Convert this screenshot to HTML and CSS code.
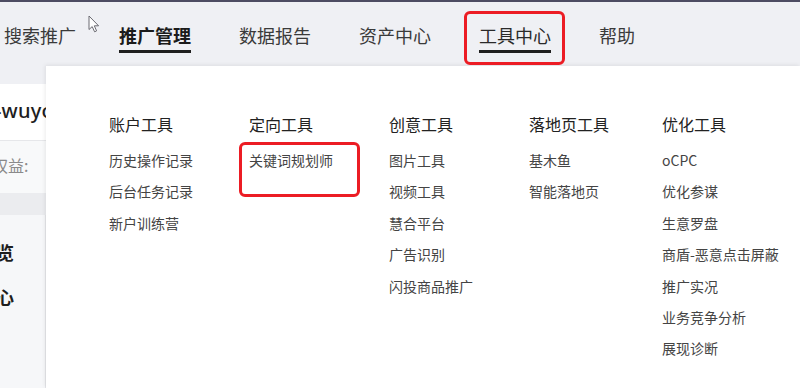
FILE: index.html
```html
<!DOCTYPE html>
<html lang="zh-CN">
<head>
<meta charset="utf-8">
<title>工具中心</title>
<link rel="stylesheet" href="styles.css">
</head>
<body>
<div class="topline"></div>
<header class="header">
  <nav class="nav">
    <span class="nav-item first">搜索推广</span>
    <span class="nav-item active">推广管理</span>
    <span class="nav-item">数据报告</span>
    <span class="nav-item">资产中心</span>
    <span class="nav-item current">工具中心<span class="mark"></span></span>
    <span class="nav-item">帮助</span>
  </nav>
  <svg class="cursor" width="12" height="18" viewBox="0 0 12 18"><path d="M1 1 L1 14.5 L4.2 11.6 L6.6 16.8 L8.6 15.9 L6.3 10.8 L10.6 10.8 Z" fill="#fff" stroke="#6b6b72" stroke-width="1" stroke-linejoin="round"/></svg>
</header>
<main class="main">
  <aside class="side">
    <div class="side-gap"></div>
    <div class="side-user"><span>-wuyou</span></div>
    <div class="side-rights"><span class="rights-text">权益:</span><span class="rights-icon"></span></div>
    <div class="side-band"></div>
    <div class="side-menu">
      <div class="side-item">概览</div>
      <div class="side-item">中心</div>
    </div>
  </aside>
  <section class="panel">
    <div class="col">
      <h3>账户工具</h3>
      <ul><li>历史操作记录</li><li>后台任务记录</li><li>新户训练营</li></ul>
    </div>
    <div class="col">
      <h3>定向工具</h3>
      <ul><li class="boxed">关键词规划师<span class="mark mark-item"></span></li></ul>
    </div>
    <div class="col">
      <h3>创意工具</h3>
      <ul><li>图片工具</li><li>视频工具</li><li>慧合平台</li><li>广告识别</li><li>闪投商品推广</li></ul>
    </div>
    <div class="col col-narrow">
      <h3>落地页工具</h3>
      <ul><li>基木鱼</li><li>智能落地页</li></ul>
    </div>
    <div class="col">
      <h3>优化工具</h3>
      <ul><li>oCPC</li><li>优化参谋</li><li>生意罗盘</li><li>商盾-恶意点击屏蔽</li><li>推广实况</li><li>业务竞争分析</li><li>展现诊断</li></ul>
    </div>
  </section>
</main>
</body>
</html>
```
FILE: styles.css
```css
* { box-sizing: border-box; margin: 0; padding: 0; }
html, body {
  width: 800px;
  height: 388px;
  overflow: hidden;
}
body {
  background: #eff0f4;
  font-family: "Noto Sans CJK SC", "Noto Sans", sans-serif;
  color: #333;
}
.topline {
  height: 2px;
  background: #4d4c62;
}
.header {
  position: relative;
  height: 64px;
}
.nav {
  display: flex;
  gap: 48px;
  padding-top: 21px;
  padding-left: 0;
}
.nav-item {
  position: relative;
  font-size: 18px;
  line-height: 24px;
  height: 30px;
  padding-bottom: 3px;
  color: #3a3a3a;
  white-space: nowrap;
  border-bottom: 3px solid transparent;
}
.nav-item.first {
  margin-left: 4px;
  margin-right: -5px;
}
.nav-item.active {
  font-weight: 700;
  color: #1b1b1b;
  border-bottom-color: #1f1f1f;
}
.nav-item.current {
  color: #2a2a2a;
  border-bottom-color: #1f1f1f;
}
.mark {
  position: absolute;
  left: -15px;
  right: -14px;
  top: -12px;
  bottom: -15px;
  border: 3px solid #ec1c24;
  border-radius: 6px;
}
.cursor {
  position: absolute;
  left: 88px;
  top: 13px;
}
.main {
  display: flex;
  height: 322px;
}
.side {
  width: 46px;
  flex: none;
  display: flex;
  flex-direction: column;
  overflow: hidden;
}
.side-gap {
  height: 18px;
  background: #eff0f4;
}
.side-user {
  height: 57px;
  background: #fff;
  border-bottom: 1px solid #e6e7ea;
  display: flex;
  align-items: center;
  padding-bottom: 4px;
  overflow: hidden;
}
.side-user span {
  font-family: "Noto Sans", sans-serif;
  font-size: 20px;
  font-weight: 500;
  color: #1e1e1e;
  white-space: nowrap;
  margin-left: -5px;
  letter-spacing: 0.2px;
}
.side-rights {
  height: 52px;
  background: #f8f9fa;
  display: flex;
  align-items: center;
  overflow: hidden;
  padding-bottom: 4px;
}
.rights-text {
  font-size: 16px;
  color: #8a8a8a;
  white-space: nowrap;
  margin-left: -8px;
}
.rights-icon {
  width: 8px;
  height: 12px;
  margin-left: 18px;
  background: #c9c9cc;
  border-radius: 2px;
  flex: none;
}
.side-band {
  height: 22px;
  background: #ebecef;
}
.side-menu {
  flex: 1;
  background: #f6f7f9;
  border-right: 1px solid #e4e5e9;
  padding-top: 25px;
}
.side-item {
  font-size: 18px;
  font-weight: 700;
  color: #1e1e1e;
  line-height: 24px;
  white-space: nowrap;
  margin-left: -22px;
  margin-bottom: 21px;
}
.panel {
  flex: 1;
  background: #fff;
  box-shadow: -1px -1px 4px rgba(0, 0, 0, 0.08);
  display: grid;
  grid-template-columns: 140px 140px 140px 133px auto;
  align-content: start;
  padding-top: 46px;
  padding-left: 63px;
}
.col h3 {
  font-size: 16px;
  font-weight: 400;
  color: #222;
  line-height: 24px;
  margin-bottom: 9px;
}
.col ul {
  list-style: none;
}
.col li {
  font-size: 14px;
  line-height: 31.4px;
  color: #444;
  white-space: nowrap;
}
.col li.boxed {
  position: relative;
  display: inline-block;
}
.mark-item {
  left: -10px;
  right: -27px;
  top: -3px;
  bottom: -21px;
}
```
